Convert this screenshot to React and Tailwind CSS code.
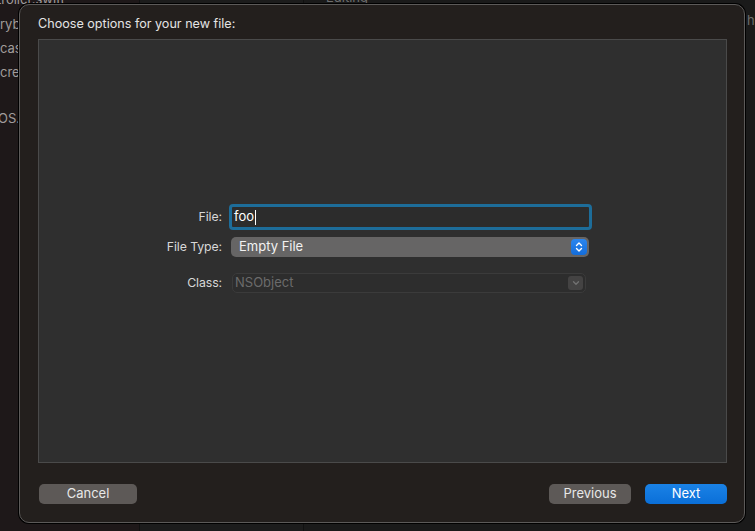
import React from "react";

const font = { fontFamily: "Inter, 'Liberation Sans', sans-serif" };

function Stepper() {
  return (
    <div className="flex h-[16px] w-[16px] items-center justify-center rounded-[4px] bg-gradient-to-b from-[#2b86ee] to-[#136ddb]">
      <svg width="8" height="12" viewBox="0 0 8 12" fill="none">
        <path d="M1.5 4.5 L4 2 L6.5 4.5" stroke="white" strokeWidth="1.4" strokeLinecap="round" strokeLinejoin="round" />
        <path d="M1.5 7.5 L4 10 L6.5 7.5" stroke="white" strokeWidth="1.4" strokeLinecap="round" strokeLinejoin="round" />
      </svg>
    </div>
  );
}

function Chevron() {
  return (
    <div className="flex h-[14px] w-[15px] items-center justify-center rounded-[3px] bg-[#444343]">
      <svg width="8" height="6" viewBox="0 0 8 6" fill="none">
        <path d="M1.5 1.8 L4 4.3 L6.5 1.8" stroke="#727272" strokeWidth="1.3" strokeLinecap="round" strokeLinejoin="round" />
      </svg>
    </div>
  );
}

function Row({ label, children, className = "" }) {
  return (
    <div className={`flex items-center ${className}`}>
      <div className="w-[183px] text-right text-[12.3px] tracking-[-0.1px] text-[#d8d8d8]">{label}</div>
      {children}
    </div>
  );
}

export default function App() {
  return (
    <div className="relative h-[531px] w-[755px] overflow-hidden bg-[#1b1b1b]" style={font}>
      {/* desktop behind the sheet */}
      <div className="absolute inset-0 flex">
        <div className="w-[140px] border-r border-[#111] bg-[#1e1819] text-[13px] leading-none text-[#a19c9b]">
          <div className="-mt-[7px] -ml-[3px] whitespace-nowrap">troller.swift</div>
          <div className="mt-[12px] whitespace-nowrap">ryboard</div>
          <div className="mt-[11px] whitespace-nowrap">cassets</div>
          <div className="mt-[11px] whitespace-nowrap">creen.storyboard</div>
          <div className="mt-[33px] -ml-[2px] whitespace-nowrap">OS.swift</div>
        </div>
        <div className="w-[164px] border-r border-[#111] bg-[#1c1c1c]" />
        <div className="flex-1 bg-[#1a1a1a] text-[13px] leading-none text-[#6e6e6e]">
          <div className="-mt-[9px] ml-[22px]">Editing</div>
          <div className="mt-[10px] ml-[443px]">h</div>
        </div>
      </div>

      {/* sheet window */}
      <div className="absolute left-[19px] top-[4px] flex h-[519px] w-[726px] flex-col rounded-[10px] border border-[#5c5a59] bg-[#231f1d] pl-[18px] pr-[17px] shadow-[0_0_0_1px_#000]">
        <div className="pt-[11px] text-[12.6px] leading-[16px] text-[#e4e4e4]">Choose options for your new file:</div>
        <div className="mt-[7px] h-[424px] border border-[#4a4a4a] bg-[#2f2f2f] pt-[164px]">
          <Row label="File:">
            <div className="ml-[7px] flex h-[26px] w-[363px] items-center rounded-[4px] border-[3px] border-[#1d6d9a] bg-[#2c2c2c] pl-[2px] text-[13px] text-white">
              foo<span className="ml-[1px] h-[15px] w-[1px] bg-white" />
            </div>
          </Row>
          <Row label="File Type:" className="mt-[7px]">
            <div className="ml-[9px] flex h-[20px] w-[358px] items-center justify-between rounded-[5px] bg-[#666565] pl-[8px] pr-[2px] text-[13px] text-[#f2f2f2]">
              <span>Empty File</span>
              <Stepper />
            </div>
          </Row>
          <Row label="Class:" className="mt-[16px]">
            <div className="ml-[10px] flex h-[20px] w-[354px] items-center justify-between rounded-[5px] border border-[#3b3b3b] bg-[#2d2d2d] pl-[2px] pr-[2px] text-[13px] text-[#6b6b6b]">
              <span>NSObject</span>
              <Chevron />
            </div>
          </Row>
        </div>
        <div className="mt-[21px] flex items-center text-[13px] text-[#e8e8e8]">
          <button className="ml-[1px] flex h-[20px] w-[98px] items-center justify-center rounded-[5px] bg-[#5d5957]">Cancel</button>
          <div className="flex-1" />
          <button className="flex h-[20px] w-[82px] items-center justify-center rounded-[5px] bg-[#5d5957]">Previous</button>
          <button className="ml-[14px] flex h-[20px] w-[82px] items-center justify-center rounded-[5px] bg-gradient-to-b from-[#1a82e6] to-[#0a6fd8] text-white">Next</button>
        </div>
      </div>
    </div>
  );
}
